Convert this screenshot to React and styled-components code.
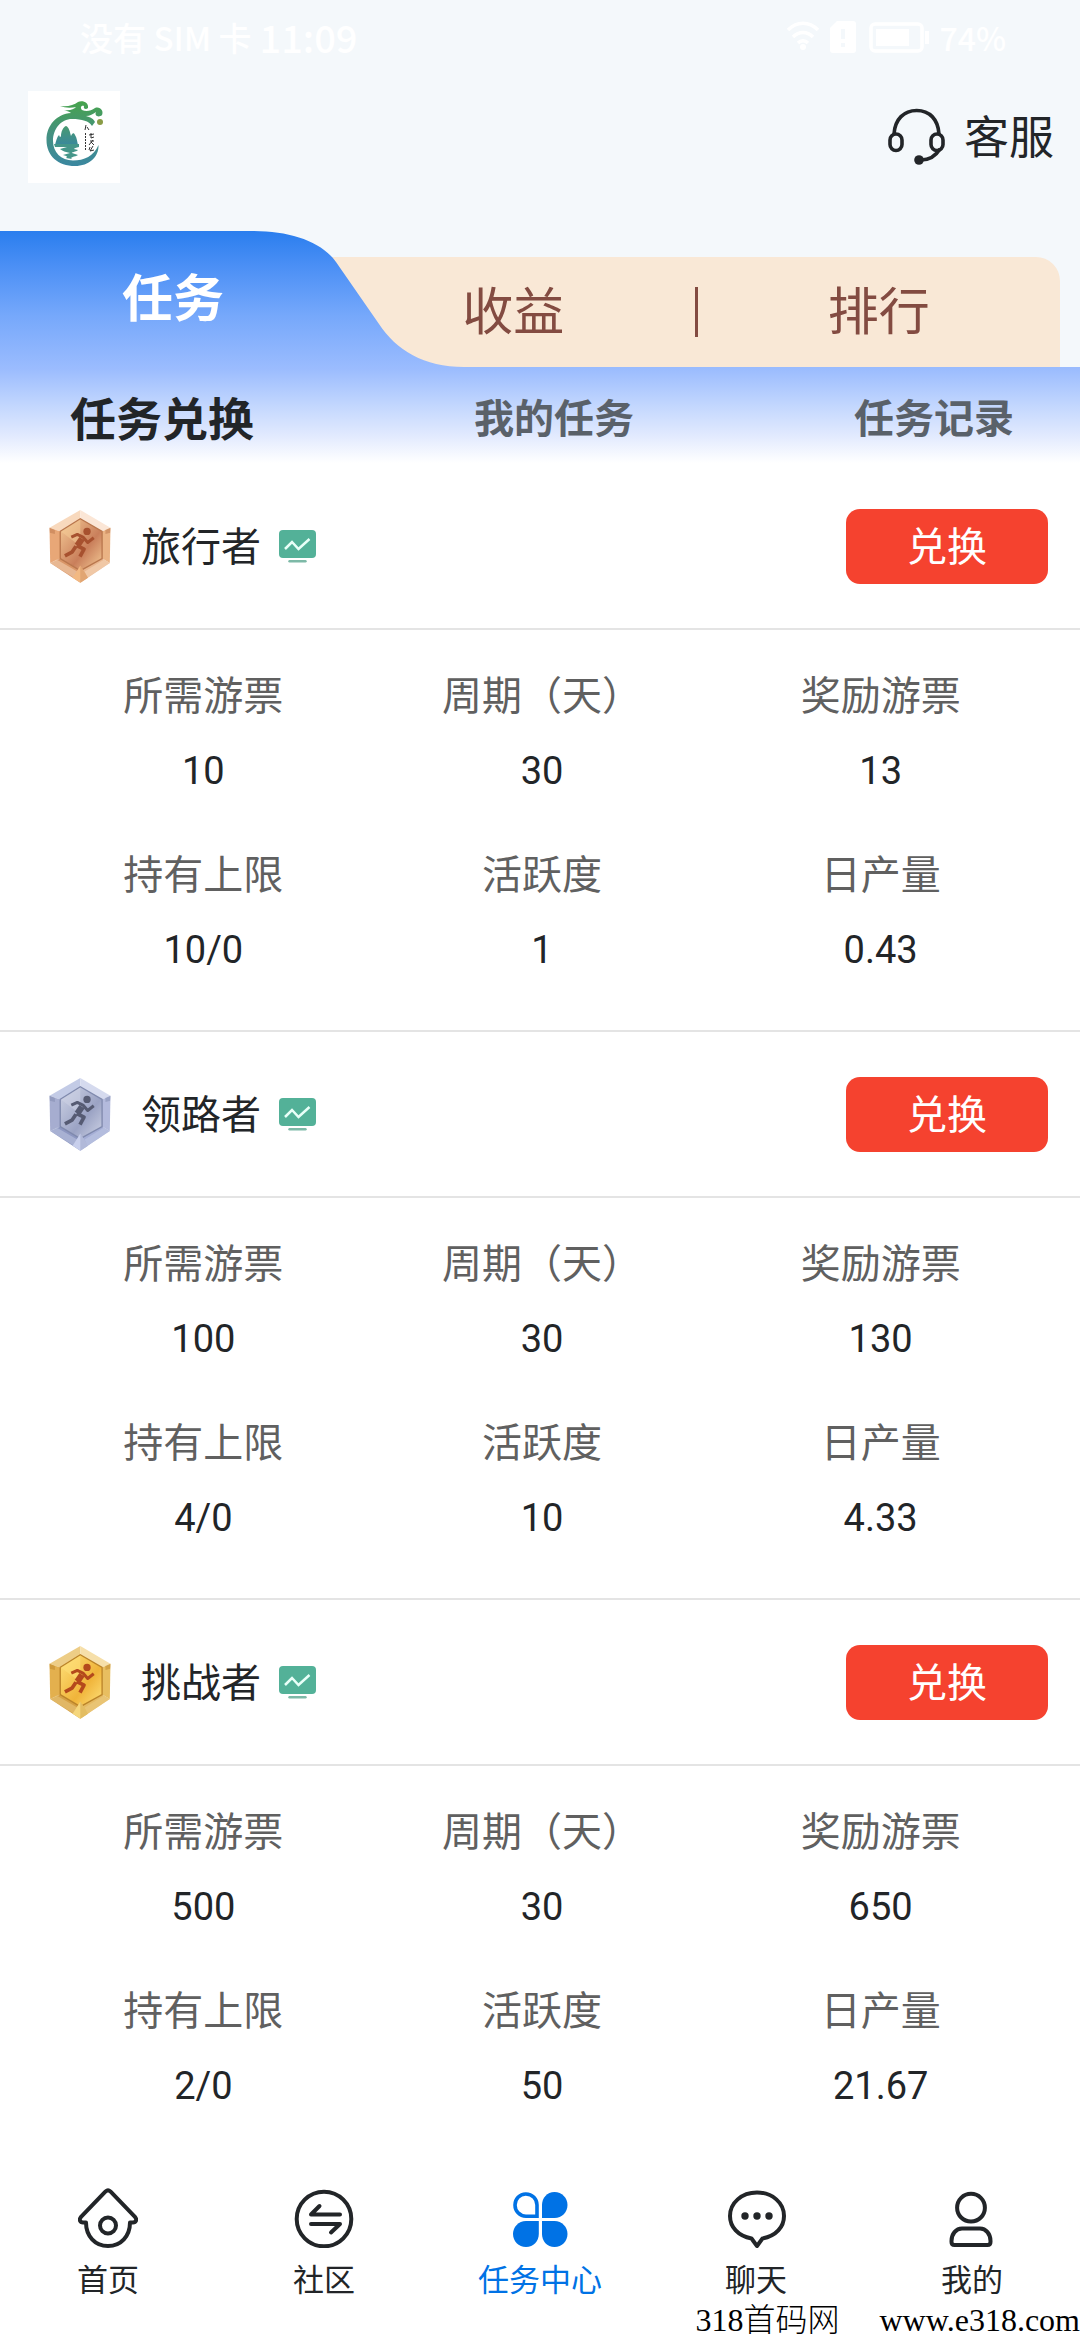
import styled, { createGlobalStyle } from "styled-components";

const GlobalStyle = createGlobalStyle`
  :root {
    --ink: #222528;
    --muted: #606060;
    --primary: #0072e5;
    --danger: #f5422f;
    --brown: #834b41;
    --peach: #f9e8d6;
    --line: #e4e4e4;
    --page: #f4f8fb;
  }

  * {
    box-sizing: border-box;
    margin: 0;
    padding: 0;
  }

  body {
    background: var(--page);
    color: var(--ink);
    font-family: "Noto Sans CJK SC", "Noto Sans", sans-serif;
  }

  button {
    padding-bottom: 4px;
    border: none;
    background: none;
    color: inherit;
    font: inherit;
    cursor: pointer;
  }

  a {
    color: inherit;
    text-decoration: none;
  }

  svg {
    display: block;
    flex-shrink: 0;
  }
`;

const Page = styled.div`
  display: flex;
  flex-direction: column;
  min-height: 100vh;
`;

const StatusBar = styled.div`
  display: flex;
  align-items: center;
  justify-content: space-between;
  height: 74px;
  padding: 0 74px 0 80px;
  color: #fff;
  font-size: 33px;
  font-weight: 500;
  line-height: 40px;
`;

const StatusGroup = styled.div`
  display: flex;
  align-items: center;
  gap: 8px;
`;

const Clock = styled.time`
  font-size: 38px;
`;

const Battery = styled.span`
  font-size: 32px;
`;

const Header = styled.header`
  display: flex;
  align-items: center;
  justify-content: space-between;
  padding: 17px 26px 48px 28px;
`;

const Logo = styled.a`
  width: 92px;
  height: 92px;
  background: #fff;
`;

const Service = styled.a`
  display: flex;
  align-items: center;
  gap: 18px;
  font-size: 45px;
  line-height: 60px;

  span {
    padding-bottom: 4px;
  }
`;

const Hero = styled.div`
  position: relative;

  &::before {
    content: "";
    position: absolute;
    inset: 0;
    z-index: 1;
    background: linear-gradient(
      #2a7eee 0,
      #4a8ff5 34px,
      #76a8fb 85px,
      #9bbcfe 138px,
      #c3d7fe 175px,
      #e2eafe 205px,
      #fff 232px
    );
    clip-path: path(
      "M0 0H252C290 0 321 10 336 31L379 93C396 119 424 136 464 136H4000V300H0Z"
    );
    pointer-events: none;
  }
`;

const Tabs = styled.div`
  display: flex;
  height: 136px;
`;

const ActiveTab = styled.button`
  position: relative;
  z-index: 2;
  width: 346px;
  margin-right: -14px;
  padding-bottom: 8px;
  color: #fff;
  font-size: 51px;
  font-weight: 700;
`;

const OtherTabs = styled.div`
  display: flex;
  flex: 1;
  align-items: center;
  margin: 26px 20px 0 0;
  border-top-right-radius: 24px;
  background: var(--peach);
  color: var(--brown);
`;

const Tab = styled.button`
  flex: 1;
  padding-bottom: 8px;
  font-size: 51px;
  line-height: 72px;
`;

const Divider = styled.span`
  width: 3px;
  height: 50px;
  background: var(--brown);
`;

const SubTabs = styled.div`
  position: relative;
  z-index: 2;
  display: flex;
  align-items: center;
  justify-content: space-between;
  height: 97px;
  padding: 4px 66px 0 70px;
`;

const SubTab = styled.button`
  color: ${({ $active }) => ($active ? "#222528" : "#5a6169")};
  font-size: ${({ $active }) => ($active ? 46 : 40)}px;
  font-weight: 700;
  line-height: 60px;
`;

const List = styled.main`
  flex: 1;
  background: #fff;
`;

const Item = styled.section`
  border-bottom: 2px solid var(--line);

  &:last-child {
    border-bottom-color: transparent;
  }
`;

const ItemHeader = styled.div`
  display: flex;
  align-items: center;
  justify-content: space-between;
  height: 166px;
  padding: 0 32px 0 49px;
  border-bottom: 2px solid var(--line);
`;

const ItemTitle = styled.div`
  display: flex;
  align-items: center;

  h2 {
    margin: 0 18px 0 30px;
    padding-bottom: 4px;
    font-size: 40px;
    font-weight: 400;
    line-height: 56px;
  }
`;

const Exchange = styled.button`
  width: 202px;
  height: 75px;
  border-radius: 14px;
  background: var(--danger);
  color: #fff;
  font-size: 40px;
  line-height: 56px;
`;

const Stats = styled.dl`
  display: grid;
  grid-template-columns: repeat(3, 1fr);
  row-gap: 45px;
  padding: 35px 30px 52px 34px;
  text-align: center;
  font-size: 40px;
  line-height: 56px;

  dt {
    color: var(--muted);
  }

  dd {
    margin-top: 22px;
    font-family: Roboto, sans-serif;
    font-size: 38px;
  }
`;

const Nav = styled.nav`
  display: grid;
  grid-template-columns: repeat(5, 1fr);
  padding: 20px 0 2px;
  background: #fff;
`;

const NavLink = styled.a`
  display: flex;
  flex-direction: column;
  align-items: center;
  gap: 10px;
  color: ${({ $active }) => ($active ? "var(--primary)" : "inherit")};
  font-size: 31px;
  line-height: 40px;
`;

const Footer = styled.footer`
  display: flex;
  justify-content: flex-end;
  gap: 40px;
  background: #fff;
  color: #000;
  font-family: "Liberation Serif", "Noto Sans CJK SC", serif;
  font-size: 32px;
  font-weight: 300;
  line-height: 40px;
`;

const LogoMark = () => (
  <svg width="92" height="92" viewBox="0 0 92 92" aria-hidden="true">
    <defs>
      <linearGradient id="dragon" x1="0" y1="0" x2="0" y2="1">
        <stop offset="0" stopColor="#46a34c" />
        <stop offset="0.5" stopColor="#459181" />
        <stop offset="1" stopColor="#3a87a0" />
      </linearGradient>
      <linearGradient id="hills" x1="0" y1="0" x2="0" y2="1">
        <stop offset="0" stopColor="#489a70" />
        <stop offset="1" stopColor="#3a889c" />
      </linearGradient>
    </defs>
    <path
      d="M64 35C61 30 54 28 44 28C33 28 25 38 25 50C25 61 33 69.500 45 69.500C56 69.500 66 65 70.500 54C71 66 61 75 47 75C30 75 18.500 65 18.500 49C18.500 34 29 23 43 22C42 21 39 20 36 19C42 20 46 18 48 16C43 17 37 17 32 15C40 16 46 14 50 11C55 9 61 12 60 17C58 19 55 18 56 15C53 14 52 17 54 19C58 21 63 20 67 17C72 15 76 20 74 24C71 27 66 25 68 21C65 23 62 25 58 25C62 26 66 28 67 31Z"
      fill="url(#dragon)"
    />
    <path
      d="M27 54C28 50 29 46 31 44C32 46 32 47 33 45C33 41 35 36 38 35C41 36 42 41 43 45C44 42 46 41 47 44C49 47 49 50 50 54Z"
      fill="url(#hills)"
    />
    <path
      d="M26 53H51V56C48 57 46 57 46 58L50 59C48 61 43 61 44 62L50 64C47 66 41 66 44 68L38 67C41 65 37 65 35 64L42 62C38 61 34 60 32 58L39 56H27Z"
      fill="#45968a"
    />
    <circle cx="72" cy="31" r="3" fill="#8a9c46" />
    <g fill="none" stroke="#333" strokeWidth="1">
      <path d="M58 34L57 39M59 36L61 39M61 44L66 43M63 42V47L66 46M62 50H66M65 49L61 54M63 51L66 54M62 56L61 59M65 55L62 60L66 59" />
      <path d="M57.500 42V60" strokeDasharray="2 1" />
    </g>
  </svg>
);

const Headset = () => (
  <svg
    width="60"
    height="60"
    viewBox="0 0 60 60"
    fill="none"
    stroke="currentColor"
    strokeWidth="3.600"
    aria-hidden="true"
  >
    <path d="M8 27C9 12 18 3.500 30.700 3.500S52 12 53 27" />
    <rect x="4" y="27" width="12" height="16.500" rx="6" />
    <rect x="45" y="27" width="12" height="16.500" rx="6" />
    <path d="M54 42C49 50 42 53 35 53" />
    <circle cx="33" cy="53" r="4.800" fill="currentColor" stroke="none" />
  </svg>
);

const StatusIcons = () => (
  <svg width="144" height="34" viewBox="0 0 144 34" fill="none" aria-hidden="true">
    <g stroke="#fff" strokeWidth="3.500">
      <path d="M1 10C10 1 22 1 31 10M6 17C12 11 20 11 26 17M11 23C14 20 18 20 21 23" />
      <rect x="84" y="4" width="51" height="27" rx="4" />
    </g>
    <circle cx="16" cy="27" r="3" fill="#fff" />
    <path d="M50 1H66Q69 1 69 4V30Q69 33 66 33H46Q43 33 43 30V8Z" fill="#fff" />
    <path d="M56 9V19M56 23V27" stroke="#f4f8fb" strokeWidth="4" />
    <path d="M89 9H122V26H89ZM138 11H142V24H138Z" fill="#fff" />
  </svg>
);

const ChartIcon = () => (
  <svg width="37" height="33" viewBox="0 0 37 33" fill="none" aria-hidden="true">
    <rect width="37" height="28" rx="4" fill="#53b198" />
    <path d="M6 19L13 12L19.500 19L30.500 9" stroke="#e9fff8" strokeWidth="2.500" />
    <path d="M10.500 31.300H26.500" stroke="#7db9a7" strokeWidth="2.400" strokeLinecap="round" />
  </svg>
);

const tones = {
  bronze: {
    top: "#f8d9bd",
    topRight: "#fbe6d6",
    left: "#e8a777",
    right: "#eab384",
    bottom: "#d99668",
    bottomRight: "#e9b68f",
    tip: "#f2b983",
    edge: "#b9764c",
    light: "#f6cd98",
    face: "#c97f5b",
    runner: "#a7512f",
  },
  silver: {
    top: "#c3cbe6",
    topRight: "#d5daee",
    left: "#a6add0",
    right: "#b3badc",
    bottom: "#8d97c1",
    bottomRight: "#a5aed6",
    tip: "#c8cfec",
    edge: "#7f89ad",
    light: "#cfd4e6",
    face: "#9ba3c4",
    runner: "#565b73",
  },
  gold: {
    top: "#edcd86",
    topRight: "#f6dfa9",
    left: "#e3b04e",
    right: "#e8be60",
    bottom: "#d5a044",
    bottomRight: "#e5ba62",
    tip: "#f5d67c",
    edge: "#bb8327",
    light: "#ffe27c",
    face: "#f0b43a",
    runner: "#b4491c",
  },
};

// Hexagonal medal: six bevels around a recessed face with the runner on it
const Medal = ({ tone }) => {
  const c = tones[tone];

  return (
    <svg width="62" height="73" viewBox="0 0 184 218" aria-hidden="true">
      <defs>
        <linearGradient id={`face-${tone}`} x1="0" y1="0" x2="1" y2="1">
          <stop offset="0" stopColor={c.light} />
          <stop offset="0.600" stopColor={c.face} />
          <stop offset="1" stopColor={c.light} />
        </linearGradient>
      </defs>
      <path d="M93 0L1 53L33 64L93 26Z" fill={c.top} />
      <path d="M93 0L183 53L158 64L93 26Z" fill={c.topRight} />
      <path d="M1 53L33 64V145L3 158Z" fill={c.left} />
      <path d="M183 53L158 64V145L181 158Z" fill={c.right} />
      <path d="M3 158L33 145L93 181V217Z" fill={c.bottom} />
      <path d="M181 158L158 145L93 181V217Z" fill={c.bottomRight} />
      <path
        d="M93 26L158 64V145L93 181L33 145V64Z"
        fill={`url(#face-${tone})`}
        stroke={c.edge}
        strokeWidth="4"
      />
      <path d="M93 28L35 64L93 108Z" fill={c.light} opacity="0.500" />
      <path d="M3 158L22 148L84 184L74 202ZM181 158L164 148L106 184L114 202Z" fill={c.top} opacity="0.500" />
      <path d="M1 53L17 60V72L2 68ZM183 53L168 60V72L182 68Z" fill={c.edge} opacity="0.500" />
      <path d="M93 166L116 202L93 217L70 202Z" fill={c.tip} />
      <path d="M93 166L116 202L93 217Z" fill={c.edge} opacity="0.300" />
      <circle cx="113" cy="64" r="11" fill={c.runner} />
      <g fill="none" stroke={c.runner} strokeWidth="9" strokeLinejoin="round">
        <path d="M66 81L84 73L102 82L115 97L133 83" />
        <path d="M98 86L84 106" strokeWidth="19" />
        <path d="M82 106L104 117L92 139M80 108L68 126L47 137" strokeWidth="11" />
      </g>
    </svg>
  );
};

const NavIcon = ({ children }) => (
  <svg
    width="60"
    height="60"
    viewBox="0 0 60 60"
    fill="none"
    stroke="currentColor"
    strokeWidth="4"
    strokeLinecap="round"
    strokeLinejoin="round"
    aria-hidden="true"
  >
    {children}
  </svg>
);

const navItems = [
  {
    label: "首页",
    icon: (
      <>
        <path d="M27.600 3.400L2.800 29.200C.8 31.800 2 34.500 5 34.500H8C8 48 17 58 30 58S52 48 52 34.500H55C58 34.500 59.200 31.800 57.200 29.200L32.400 3.400Q30 1.200 27.600 3.400Z" />
        <circle cx="30" cy="37.500" r="8" />
      </>
    ),
  },
  {
    label: "社区",
    icon: (
      <>
        <circle cx="30" cy="31" r="27.300" />
        <path d="M46 26.500H17L25.500 18M17 36H46L37 44.500" />
      </>
    ),
  },
  {
    label: "任务中心",
    active: true,
    icon: (
      <>
        <path d="M15.800 6C22.500 6 27 11 27 17V28.200H16C9.500 28.200 5 23 5 17S9.500 6 15.800 6Z" strokeWidth="3.600" strokeLinejoin="miter" />
        <g fill="currentColor" stroke="none">
          <path d="M44.500 4C52 4 57.500 10 57.500 17S52 30 44.500 30H32V17C32 10 37 4 44.500 4Z" />
          <path d="M28.800 33H16C8.500 33 3 39 3 46S8.500 59 16 59S28.800 53 28.800 46Z" />
          <path d="M32 33H44.500C52 33 57.500 39 57.500 46S52 59 44.500 59S32 53 32 46Z" />
        </g>
      </>
    ),
  },
  {
    label: "聊天",
    icon: (
      <>
        <path d="M31 4.500C46.500 4.500 58 15 58 28C58 39 50 48 36.500 50.500L31 58L25.500 50.500C12 48 4 39 4 28C4 15 15.500 4.500 31 4.500Z" />
        <g fill="currentColor" stroke="none">
          <circle cx="19" cy="28" r="3.700" />
          <circle cx="31" cy="28" r="3.700" />
          <circle cx="43" cy="28" r="3.700" />
        </g>
      </>
    ),
  },
  {
    label: "我的",
    icon: (
      <>
        <circle cx="29" cy="19.700" r="13.900" />
        <path d="M20 40.500H38C44 40.500 48.500 46 48.500 53V54Q48.500 57 45.500 57H12.500Q9.500 57 9.500 54V53C9.500 46 14 40.500 20 40.500Z" />
      </>
    ),
  },
];

const tasks = [
  { name: "旅行者", tone: "bronze", values: ["10", "30", "13", "10/0", "1", "0.43"] },
  { name: "领路者", tone: "silver", values: ["100", "30", "130", "4/0", "10", "4.33"] },
  { name: "挑战者", tone: "gold", values: ["500", "30", "650", "2/0", "50", "21.67"] },
];

const labels = ["所需游票", "周期（天）", "奖励游票", "持有上限", "活跃度", "日产量"];

export default function App() {
  return (
    <Page>
      <GlobalStyle />
      <StatusBar>
        <StatusGroup>
          <span>没有 SIM 卡</span>
          <Clock>11:09</Clock>
        </StatusGroup>
        <StatusGroup>
          <StatusIcons />
          <Battery>74%</Battery>
        </StatusGroup>
      </StatusBar>
      <Header>
        <Logo href="#home" aria-label="首页">
          <LogoMark />
        </Logo>
        <Service href="#service">
          <Headset />
          <span>客服</span>
        </Service>
      </Header>
      <Hero>
        <Tabs>
          <ActiveTab type="button">任务</ActiveTab>
          <OtherTabs>
            <Tab type="button">收益</Tab>
            <Divider />
            <Tab type="button">排行</Tab>
          </OtherTabs>
        </Tabs>
        <SubTabs>
          <SubTab type="button" $active>
            任务兑换
          </SubTab>
          <SubTab type="button">我的任务</SubTab>
          <SubTab type="button">任务记录</SubTab>
        </SubTabs>
      </Hero>
      <List>
        {tasks.map((task) => (
          <Item key={task.name}>
            <ItemHeader>
              <ItemTitle>
                <Medal tone={task.tone} />
                <h2>{task.name}</h2>
                <ChartIcon />
              </ItemTitle>
              <Exchange type="button">兑换</Exchange>
            </ItemHeader>
            <Stats>
              {labels.map((label, i) => (
                <div key={label}>
                  <dt>{label}</dt>
                  <dd>{task.values[i]}</dd>
                </div>
              ))}
            </Stats>
          </Item>
        ))}
      </List>
      <Nav>
        {navItems.map((item) => (
          <NavLink key={item.label} href="#" $active={item.active}>
            <NavIcon>{item.icon}</NavIcon>
            {item.label}
          </NavLink>
        ))}
      </Nav>
      <Footer>
        <span>318首码网</span>
        <span>www.e318.com</span>
      </Footer>
    </Page>
  );
}
